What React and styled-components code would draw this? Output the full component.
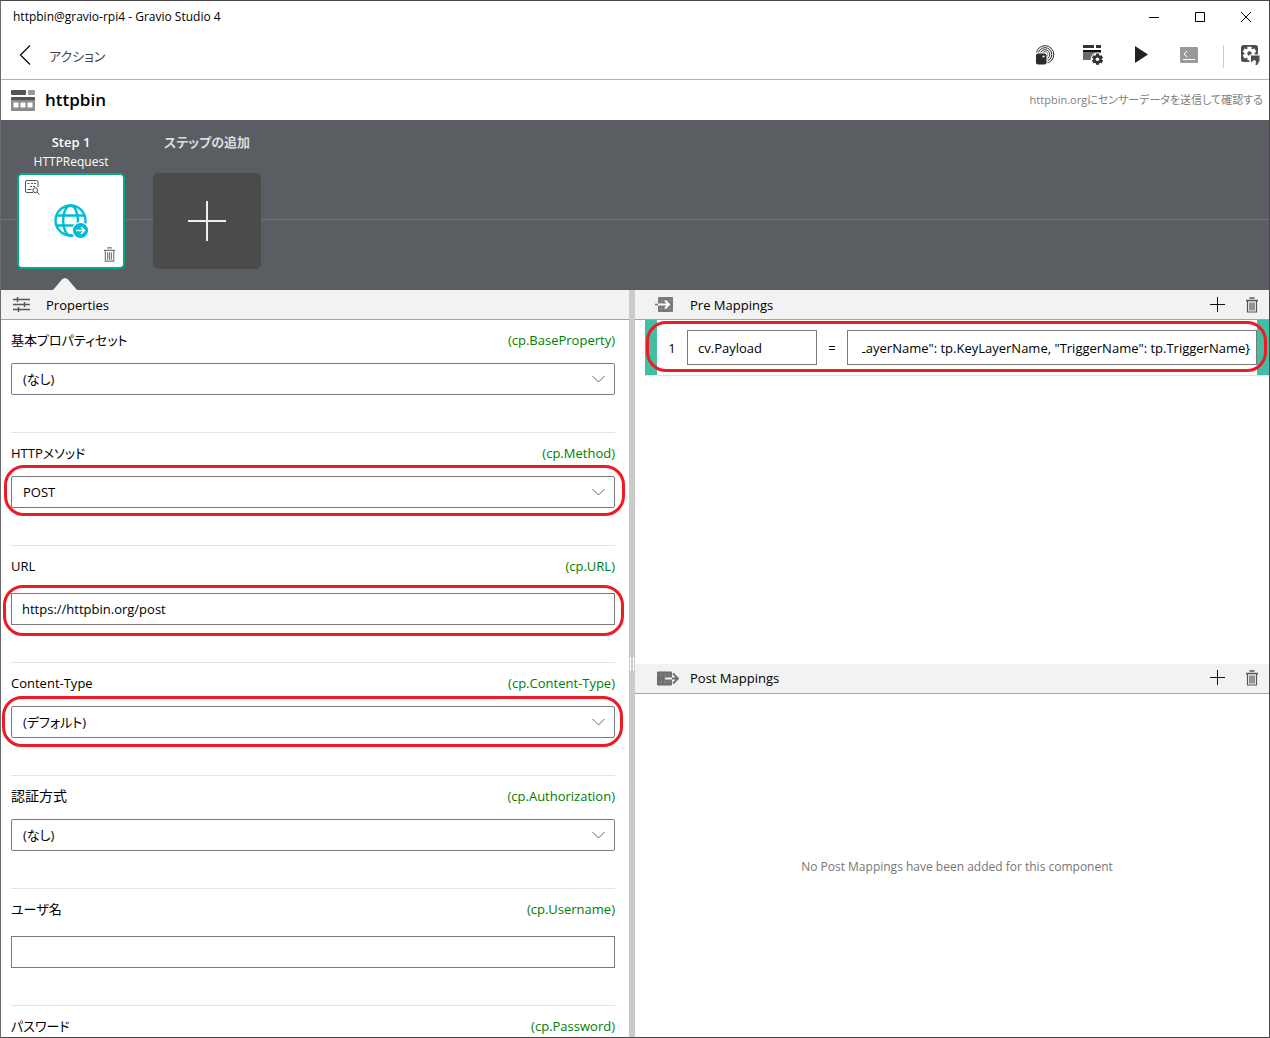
import { useEffect, useRef, useState } from "react";
import styled, { createGlobalStyle, css } from "styled-components";

const GlobalStyle = createGlobalStyle`
  * {
    box-sizing: border-box;
  }

  body {
    margin: 0;
    background-color: #fff;
    color: #000;
    font-family: "Open Sans", "Noto Sans CJK JP", sans-serif;
    font-size: 13px;
    line-height: 20px;
    font-feature-settings: "palt";
  }

  button, input, select {
    font: inherit;
    font-feature-settings: inherit;
    color: inherit;
  }
`;

const Window = styled.div`
  display: flex;
  flex-direction: column;
  height: 100vh;
  border: 1px solid #4a4a4a;
  border-left-color: #6b6b6b;
`;

const IconButton = styled.button`
  display: flex;
  align-items: center;
  justify-content: center;
  width: ${({ $width }) => $width || 48}px;
  height: 100%;
  padding: 0;
  border: none;
  background: none;
  cursor: pointer;

  svg {
    display: block;
  }
`;

// TITLE BAR
const TitleBar = styled.header`
  display: flex;
  align-items: center;
  height: 32px;
  flex-shrink: 0;
  padding-left: 12px;
  font-size: 12px;
`;

const WindowTitle = styled.span`
  flex: 1;
`;

// TOOLBAR
const Toolbar = styled.nav`
  display: flex;
  align-items: center;
  height: 47px;
  flex-shrink: 0;
  border-bottom: 1px solid #b4b4b4;

  ${IconButton} {
    padding-bottom: 2px;
  }
`;

const ToolbarTitle = styled.span`
  flex: 1;
  color: #444;
`;

const Divider = styled.span`
  width: 1px;
  height: 23px;
  margin: 0 7px 0 10px;
  background-color: #ccc;
`;

// ACTION HEADER
const ActionHeader = styled.div`
  display: flex;
  align-items: center;
  gap: 10px;
  height: 40px;
  flex-shrink: 0;
  padding: 0 6px 0 10px;
`;

const ActionName = styled.h1`
  flex: 1;
  margin: 0;
  font-size: 17px;
  font-weight: 600;
`;

const ActionDescription = styled.span`
  color: #808080;
  font-size: 11px;
`;

// STEPS
const StepStrip = styled.section`
  display: flex;
  gap: 28px;
  height: 170px;
  flex-shrink: 0;
  padding: 12px 16px 0;
  background: linear-gradient(#00aa87, #00aa87) 0 99px / 100% 1px no-repeat #5a5d61;
  color: #fff;
`;

const Step = styled.div`
  position: relative;
  display: flex;
  flex-direction: column;
  align-items: center;
  width: 108px;
`;

const StepTitle = styled.span`
  height: 20px;
  font-weight: 600;
  white-space: nowrap;
  color: ${({ $muted }) => ($muted ? "#dcdcdc" : "#fff")};
`;

const StepName = styled.span`
  height: 21px;
  font-size: 12px;
`;

const cardStyle = css`
  width: 108px;
  height: 96px;
  border-radius: 5px;
`;

const StepCard = styled.div`
  ${cardStyle}
  display: flex;
  flex-direction: column;
  align-items: center;
  justify-content: space-between;
  padding: 5px 6px;
  border: 2px solid #00aa87;
  background-color: #fff;
`;

const CardButton = styled(IconButton)`
  width: 15px;
  height: 15px;
  align-self: ${({ $side }) => ($side === "right" ? "flex-end" : "flex-start")};
`;

const AddStep = styled.button`
  ${cardStyle}
  display: flex;
  align-items: center;
  justify-content: center;
  padding: 0;
  border: none;
  background-color: #4b4b4b;
  cursor: pointer;
`;

const Pointer = styled.svg`
  position: absolute;
  bottom: 0;
  left: 36px;
`;

// PANELS
const Panels = styled.main`
  display: grid;
  grid-template-columns: minmax(0, 628fr) 6px minmax(0, 634fr);
  flex: 1;
  min-height: 0;
`;

const Splitter = styled.div`
  display: flex;
  align-items: center;
  justify-content: center;
  background-color: #cacaca;
`;

const Grip = styled.span`
  width: 4px;
  height: 14px;
  border: solid #fff;
  border-width: 0 1px;
`;

const Column = styled.div`
  display: grid;
  grid-template-rows: ${({ $rows }) => $rows};
  min-height: 0;
`;

const Panel = styled.section`
  display: flex;
  flex-direction: column;
  min-height: 0;
`;

const PanelHeader = styled.div`
  display: flex;
  align-items: center;
  height: 30px;
  flex-shrink: 0;
  padding-left: ${({ $indent }) => $indent}px;
  border-bottom: 1px solid #a3a3a3;
  background-color: #f2f2f2;
`;

const PanelTitle = styled.h2`
  flex: 1;
  margin: 0 0 0 ${({ $gap }) => $gap}px;
  font-size: 13px;
  font-weight: 400;
`;

// PROPERTIES
const Fields = styled.div`
  flex: 1;
  min-height: 0;
  padding: 0 14px 0 10px;
  overflow-y: auto;
  scrollbar-width: none;
`;

const Field = styled.div`
  padding: 10px 0 37px;
  border-bottom: 1px solid #e3e3e3;
`;

const FieldHeader = styled.div`
  display: flex;
  justify-content: space-between;
  height: 20px;
  margin-bottom: ${({ $gap }) => $gap}px;
`;

const Label = styled.label`
  font-size: ${({ $kanji }) => ($kanji ? 14 : 13)}px;
`;

const VariableName = styled.span`
  color: #008000;
`;

const Control = styled.div`
  position: relative;
`;

const Select = styled.select`
  display: block;
  width: 100%;
  height: 32px;
  padding: 0 32px 0 11px;
  border: 1px solid #7a7a7a;
  border-radius: 2px;
  background-color: #fff;
  appearance: none;
  outline: none;
`;

const Chevron = styled.svg`
  position: absolute;
  top: 12px;
  right: 10px;
  pointer-events: none;
`;

const Input = styled.input`
  display: block;
  width: 100%;
  height: ${({ $height }) => $height || 32}px;
  padding: 0 ${({ $right }) => $right || 10}px 0 ${({ $left }) => $left || 10}px;
  border: 1px solid #7a7a7a;
  border-radius: 0;
  background-color: #fff;
  outline: none;
`;

const Highlight = styled.span`
  position: absolute;
  inset: ${({ $inset }) => $inset};
  border: 3px solid #ed1c24;
  border-radius: 20px;
  pointer-events: none;
`;

// MAPPINGS
const MappingRow = styled.div`
  position: relative;
  display: grid;
  grid-template-columns: 30px 130px 30px minmax(0, 1fr);
  align-items: center;
  height: 55px;
  margin-left: 10px;
  border: solid #40bfa5;
  border-width: 0 12px;
  box-shadow: 0 1px #e3e3e3;
  text-align: center;
`;

const EmptyMessage = styled.p`
  display: flex;
  flex: 1;
  align-items: center;
  justify-content: center;
  margin: 4px 0 0 10px;
  color: #767676;
  font-size: 12px;
`;

const FIELDS = [
  { id: "base", label: "基本プロパティセット", variable: "cp.BaseProperty", options: ["(なし)"] },
  { id: "method", label: "HTTPメソッド", variable: "cp.Method", options: ["POST"], highlight: "-11px -10px -8px -7px" },
  { id: "url", label: "URL", variable: "cp.URL", value: "https://httpbin.org/post", highlight: "-8px -9px -11px -8px" },
  { id: "content", label: "Content-Type", variable: "cp.Content-Type", options: ["(デフォルト)"], highlight: "-10px -8px -9px -9px" },
  { id: "auth", label: "認証方式", variable: "cp.Authorization", options: ["(なし)"], kanji: true },
  { id: "user", label: "ユーザ名", variable: "cp.Username", value: "" },
  { id: "password", label: "パスワード", variable: "cp.Password", value: "" },
];

const TrashIcon = ({ size = 16, color = "#555" }) => (
  <svg width={size} height={size} viewBox="0 0 16 16" fill="none" stroke={color}>
    <path d="M5.5 1h5M2 3.5h12" strokeWidth="1.4" />
    <path d="M3.5 4v11h9V4M6 5.5v8M8 5.5v8M10 5.5v8" strokeWidth="1.2" />
  </svg>
);

const PlusIcon = () => (
  <svg width="16" height="16" viewBox="0 0 16 16" stroke="#111">
    <path d="M8.5 0v15M1 7.5h15" />
  </svg>
);

const GEAR_TEETH = [0, 60, 120];

const Gear = ({ cx, cy, r, color, hole }) => (
  <g>
    {GEAR_TEETH.map(angle => (
      <rect
        key={angle}
        x={cx - r * 0.3}
        y={cy - r}
        width={r * 0.6}
        height={r * 2}
        rx="0.5"
        fill={color}
        transform={`rotate(${angle} ${cx} ${cy})`}
      />
    ))}
    <circle cx={cx} cy={cy} r={r * 0.75} fill={color} />
    <circle cx={cx} cy={cy} r={r * 0.32} fill={hole} />
  </g>
);

const SensorIcon = () => (
  <svg width="20" height="20" viewBox="0 0 20 20" fill="none" stroke="#2b2b2b">
    <circle cx="10" cy="9.5" r="8.8" />
    <circle cx="10" cy="9.5" r="6.8" />
    <circle cx="10" cy="9.5" r="4.8" />
    <circle cx="10" cy="9.5" r="2.8" />
    <path d="M0 7.5h12.5V20H0z" fill="#fff" stroke="none" />
    <rect x="1" y="8.5" width="10.5" height="11" rx="2" fill="#2b2b2b" stroke="none" />
    <circle cx="8.5" cy="11.5" r="1.1" fill="#fff" stroke="none" />
  </svg>
);

const ActionSettingsIcon = () => (
  <svg width="21" height="20" viewBox="0 0 21 20">
    <path d="M0 0h11v3H0zM13 0h5v3h-5z" fill="#333" />
    <path d="M0 5h18v2H0z" fill="#111" />
    <path d="M0 7h18v8H0z" fill="#6a6a6a" />
    <circle cx="14.5" cy="14.2" r="6.8" fill="#fff" />
    <Gear cx={14.5} cy={14.2} r={5.6} color="#333" hole="#fff" />
  </svg>
);

const TerminalIcon = () => (
  <svg width="18" height="16" viewBox="0 0 18 16" fill="none" stroke="#fff">
    <rect width="18" height="16" rx="1" fill="#999" stroke="none" />
    <path d="M7 4 4 7l3 3M3 12.5h12" />
  </svg>
);

const TriggerIcon = () => (
  <svg width="19" height="20" viewBox="0 0 19 20">
    <rect width="17" height="17" rx="2.5" fill="#4d4d4d" />
    <Gear cx={8.5} cy={8.5} r={6.8} color="#fff" hole="#4d4d4d" />
    <path d="M8.5 9.500H19V20h-7l-3.500-2z" fill="#fff" />
    <path d="M10 10.5h8.5V16L16 20h-1.5l.5-4-2-1-3 2.500z" fill="#4d4d4d" />
  </svg>
);

const ActionIcon = () => (
  <svg width="24" height="21" viewBox="0 0 24 21">
    <rect width="15" height="5" rx="1" fill="#555" />
    <rect x="17" width="7" height="5" rx="1" fill="#999" />
    <path d="M0 8a1 1 0 0 1 1-1h22a1 1 0 0 1 1 1v3H0z" fill="#555" />
    <path d="M0 10h24v10a1 1 0 0 1-1 1H1a1 1 0 0 1-1-1z" fill="#8c8c8c" />
    <path d="M2.5 12.5h5v5h-5zM9.5 12.5h5v5h-5zM16.5 12.5h5v5h-5z" fill="#fff" />
  </svg>
);

const PreviewIcon = () => (
  <svg width="15" height="15" viewBox="0 0 15 15" fill="none" stroke="#555">
    <path d="M8 12.5H2A1.5 1.5 0 0 1 .5 11V2A1.5 1.5 0 0 1 2 .5h9.5A1.5 1.5 0 0 1 13 2v5" />
    <path d="M2.5 3.5h2M6 3.5h2M9 3.5h2M5 6.5h2M8 6.5h2M2.5 9.5h4" />
    <circle cx="10.2" cy="10.2" r="2.4" />
    <path d="m12 12 2.5 2.5" />
  </svg>
);

const GlobeIcon = () => (
  <svg width="35" height="35" viewBox="0 0 35 35" fill="none" stroke="#00bcd4" strokeWidth="2.4">
    <circle cx="16.5" cy="16.5" r="15" />
    <ellipse cx="16.5" cy="16.5" rx="7.4" ry="15" />
    <path d="M3 11.5h27M3 21.5h27" />
    <circle cx="26.5" cy="26.5" r="8.2" fill="#00bcd4" stroke="#fff" strokeWidth="1.2" />
    <path d="M22 26.5h8.5M27 23l3.5 3.5L27 30" stroke="#fff" strokeWidth="1.6" />
  </svg>
);

const SlidersIcon = () => (
  <svg width="17" height="15" viewBox="0 0 17 15" fill="none" stroke="#555" strokeWidth="1.4">
    <path d="M0 2.5h17M0 7.5h17M0 12.5h17M4.5 0v5M11.5 5v5M5.5 10v5" />
  </svg>
);

const PreMappingIcon = () => (
  <svg width="18" height="15" viewBox="0 0 18 15" fill="none">
    <rect x="3" width="15" height="15" rx="1" fill="#777" />
    <path d="M3 3.5h15M3 11.5h15M6.5 0v15M15 0v15" stroke="#8f8f8f" strokeWidth="0.6" />
    <path d="M0 7.5h3" stroke="#777" strokeWidth="1.6" />
    <path d="M3 7.5h11M10 3.5l4 4-4 4" stroke="#fff" strokeWidth="2" />
  </svg>
);

const PostMappingIcon = () => (
  <svg width="22" height="15" viewBox="0 0 22 15" fill="none">
    <rect width="15" height="14" y="0.5" rx="1" fill="#6c6c6c" />
    <path d="M0 4h15M0 11h15M4 0v15M8 0v15M12 0v15" stroke="#8f8f8f" strokeWidth="0.6" />
    <path d="M8 7.5h7" stroke="#f2f2f2" strokeWidth="2" />
    <path d="M15 7.5h6M16 2.5l5 5-5 5" stroke="#6c6c6c" strokeWidth="1.8" />
  </svg>
);

const PropertyField = ({ field }) => {
  const [value, setValue] = useState(field.options ? field.options[0] : field.value);
  const onChange = e => setValue(e.target.value);

  return (
    <Field>
      <FieldHeader $gap={field.options ? 13 : 17}>
        <Label htmlFor={field.id} $kanji={field.kanji}>
          {field.label}
        </Label>
        <VariableName>({field.variable})</VariableName>
      </FieldHeader>
      <Control>
        {field.options ? (
          <>
            <Select id={field.id} value={value} onChange={onChange}>
              {field.options.map(option => (
                <option key={option}>{option}</option>
              ))}
            </Select>
            <Chevron width="13" height="8" viewBox="0 0 13 8" fill="none" stroke="#666">
              <path d="m.5 1 6 6 6-6" />
            </Chevron>
          </>
        ) : (
          <Input id={field.id} value={value} onChange={onChange} />
        )}
        {field.highlight && <Highlight $inset={field.highlight} />}
      </Control>
    </Field>
  );
};

const MappingActions = () => (
  <>
    <IconButton aria-label="Add" $width={36}>
      <PlusIcon />
    </IconButton>
    <IconButton aria-label="Delete" $width={34}>
      <TrashIcon />
    </IconButton>
  </>
);

const App = () => {
  const [target, setTarget] = useState("cv.Payload");
  const [expression, setExpression] = useState('LayerName": tp.KeyLayerName, "TriggerName": tp.TriggerName}');
  const expressionRef = useRef(null);

  // keep the end of a long expression in view
  useEffect(() => {
    expressionRef.current.scrollLeft = expressionRef.current.scrollWidth;
  }, []);

  return (
    <>
      <GlobalStyle />
      <Window>
        <TitleBar>
          <WindowTitle>httpbin@gravio-rpi4 - Gravio Studio 4</WindowTitle>
          <IconButton aria-label="Minimize" $width={46}>
            <svg width="10" height="10" viewBox="0 0 10 10" stroke="#000">
              <path d="M0 5.5h10" />
            </svg>
          </IconButton>
          <IconButton aria-label="Maximize" $width={46}>
            <svg width="10" height="10" viewBox="0 0 10 10" fill="none" stroke="#000">
              <path d="M.5.5h9v9h-9z" />
            </svg>
          </IconButton>
          <IconButton aria-label="Close" $width={46}>
            <svg width="10" height="10" viewBox="0 0 10 10" stroke="#000">
              <path d="m0 0 10 10M10 0 0 10" />
            </svg>
          </IconButton>
        </TitleBar>

        <Toolbar>
          <IconButton aria-label="Back">
            <svg width="12" height="20" viewBox="0 0 12 20" fill="none" stroke="#111" strokeWidth="1.3">
              <path d="M11 .5 1.5 10l9.5 9.5" />
            </svg>
          </IconButton>
          <ToolbarTitle>アクション</ToolbarTitle>
          <IconButton aria-label="Sensors">
            <SensorIcon />
          </IconButton>
          <IconButton aria-label="Action settings">
            <ActionSettingsIcon />
          </IconButton>
          <IconButton aria-label="Run">
            <svg width="14" height="18" viewBox="0 0 14 18">
              <path d="M1 0v17l13-8.5z" fill="#222" />
            </svg>
          </IconButton>
          <IconButton aria-label="Log">
            <TerminalIcon />
          </IconButton>
          <Divider />
          <IconButton aria-label="Trigger" $width={38}>
            <TriggerIcon />
          </IconButton>
        </Toolbar>

        <ActionHeader>
          <ActionIcon />
          <ActionName>httpbin</ActionName>
          <ActionDescription>httpbin.orgにセンサーデータを送信して確認する</ActionDescription>
        </ActionHeader>

        <StepStrip>
          <Step>
            <StepTitle>Step 1</StepTitle>
            <StepName>HTTPRequest</StepName>
            <StepCard>
              <CardButton aria-label="Preview">
                <PreviewIcon />
              </CardButton>
              <GlobeIcon />
              <CardButton aria-label="Delete step" $side="right">
                <TrashIcon size={15} color="#777" />
              </CardButton>
            </StepCard>
            <Pointer width="24" height="12" viewBox="0 0 24 12">
              <path d="M0 12 9 1.5Q12-1.5 15 1.5L24 12z" fill="#f2f2f2" />
            </Pointer>
          </Step>
          <Step>
            <StepTitle $muted>ステップの追加</StepTitle>
            <StepName />
            <AddStep aria-label="Add step">
              <svg width="38" height="40" viewBox="0 0 38 40" stroke="#eee" strokeWidth="2">
                <path d="M19 0v40M0 20h38" />
              </svg>
            </AddStep>
          </Step>
        </StepStrip>

        <Panels>
          <Column $rows="minmax(0, 1fr)">
            <Panel>
              <PanelHeader $indent={12}>
                <SlidersIcon />
                <PanelTitle $gap={16}>Properties</PanelTitle>
              </PanelHeader>
              <Fields>
                {FIELDS.map(field => (
                  <PropertyField key={field.id} field={field} />
                ))}
              </Fields>
            </Panel>
          </Column>
          <Splitter>
            <Grip />
          </Splitter>
          <Column $rows="minmax(0, 1fr) minmax(0, 1fr)">
            <Panel>
              <PanelHeader $indent={20}>
                <PreMappingIcon />
                <PanelTitle $gap={17}>Pre Mappings</PanelTitle>
                <MappingActions />
              </PanelHeader>
              <MappingRow>
                <span>1</span>
                <Input aria-label="Target" $height={35} value={target} onChange={e => setTarget(e.target.value)} />
                <span>=</span>
                <Input
                  aria-label="Expression"
                  ref={expressionRef}
                  $height={35}
                  $left={14}
                  $right={6}
                  value={expression}
                  onChange={e => setExpression(e.target.value)}
                />
                <Highlight $inset="1px -10px 3px -11px" />
              </MappingRow>
            </Panel>
            <Panel>
              <PanelHeader $indent={22}>
                <PostMappingIcon />
                <PanelTitle $gap={11}>Post Mappings</PanelTitle>
                <MappingActions />
              </PanelHeader>
              <EmptyMessage>No Post Mappings have been added for this component</EmptyMessage>
            </Panel>
          </Column>
        </Panels>
      </Window>
    </>
  );
};

export default App;
